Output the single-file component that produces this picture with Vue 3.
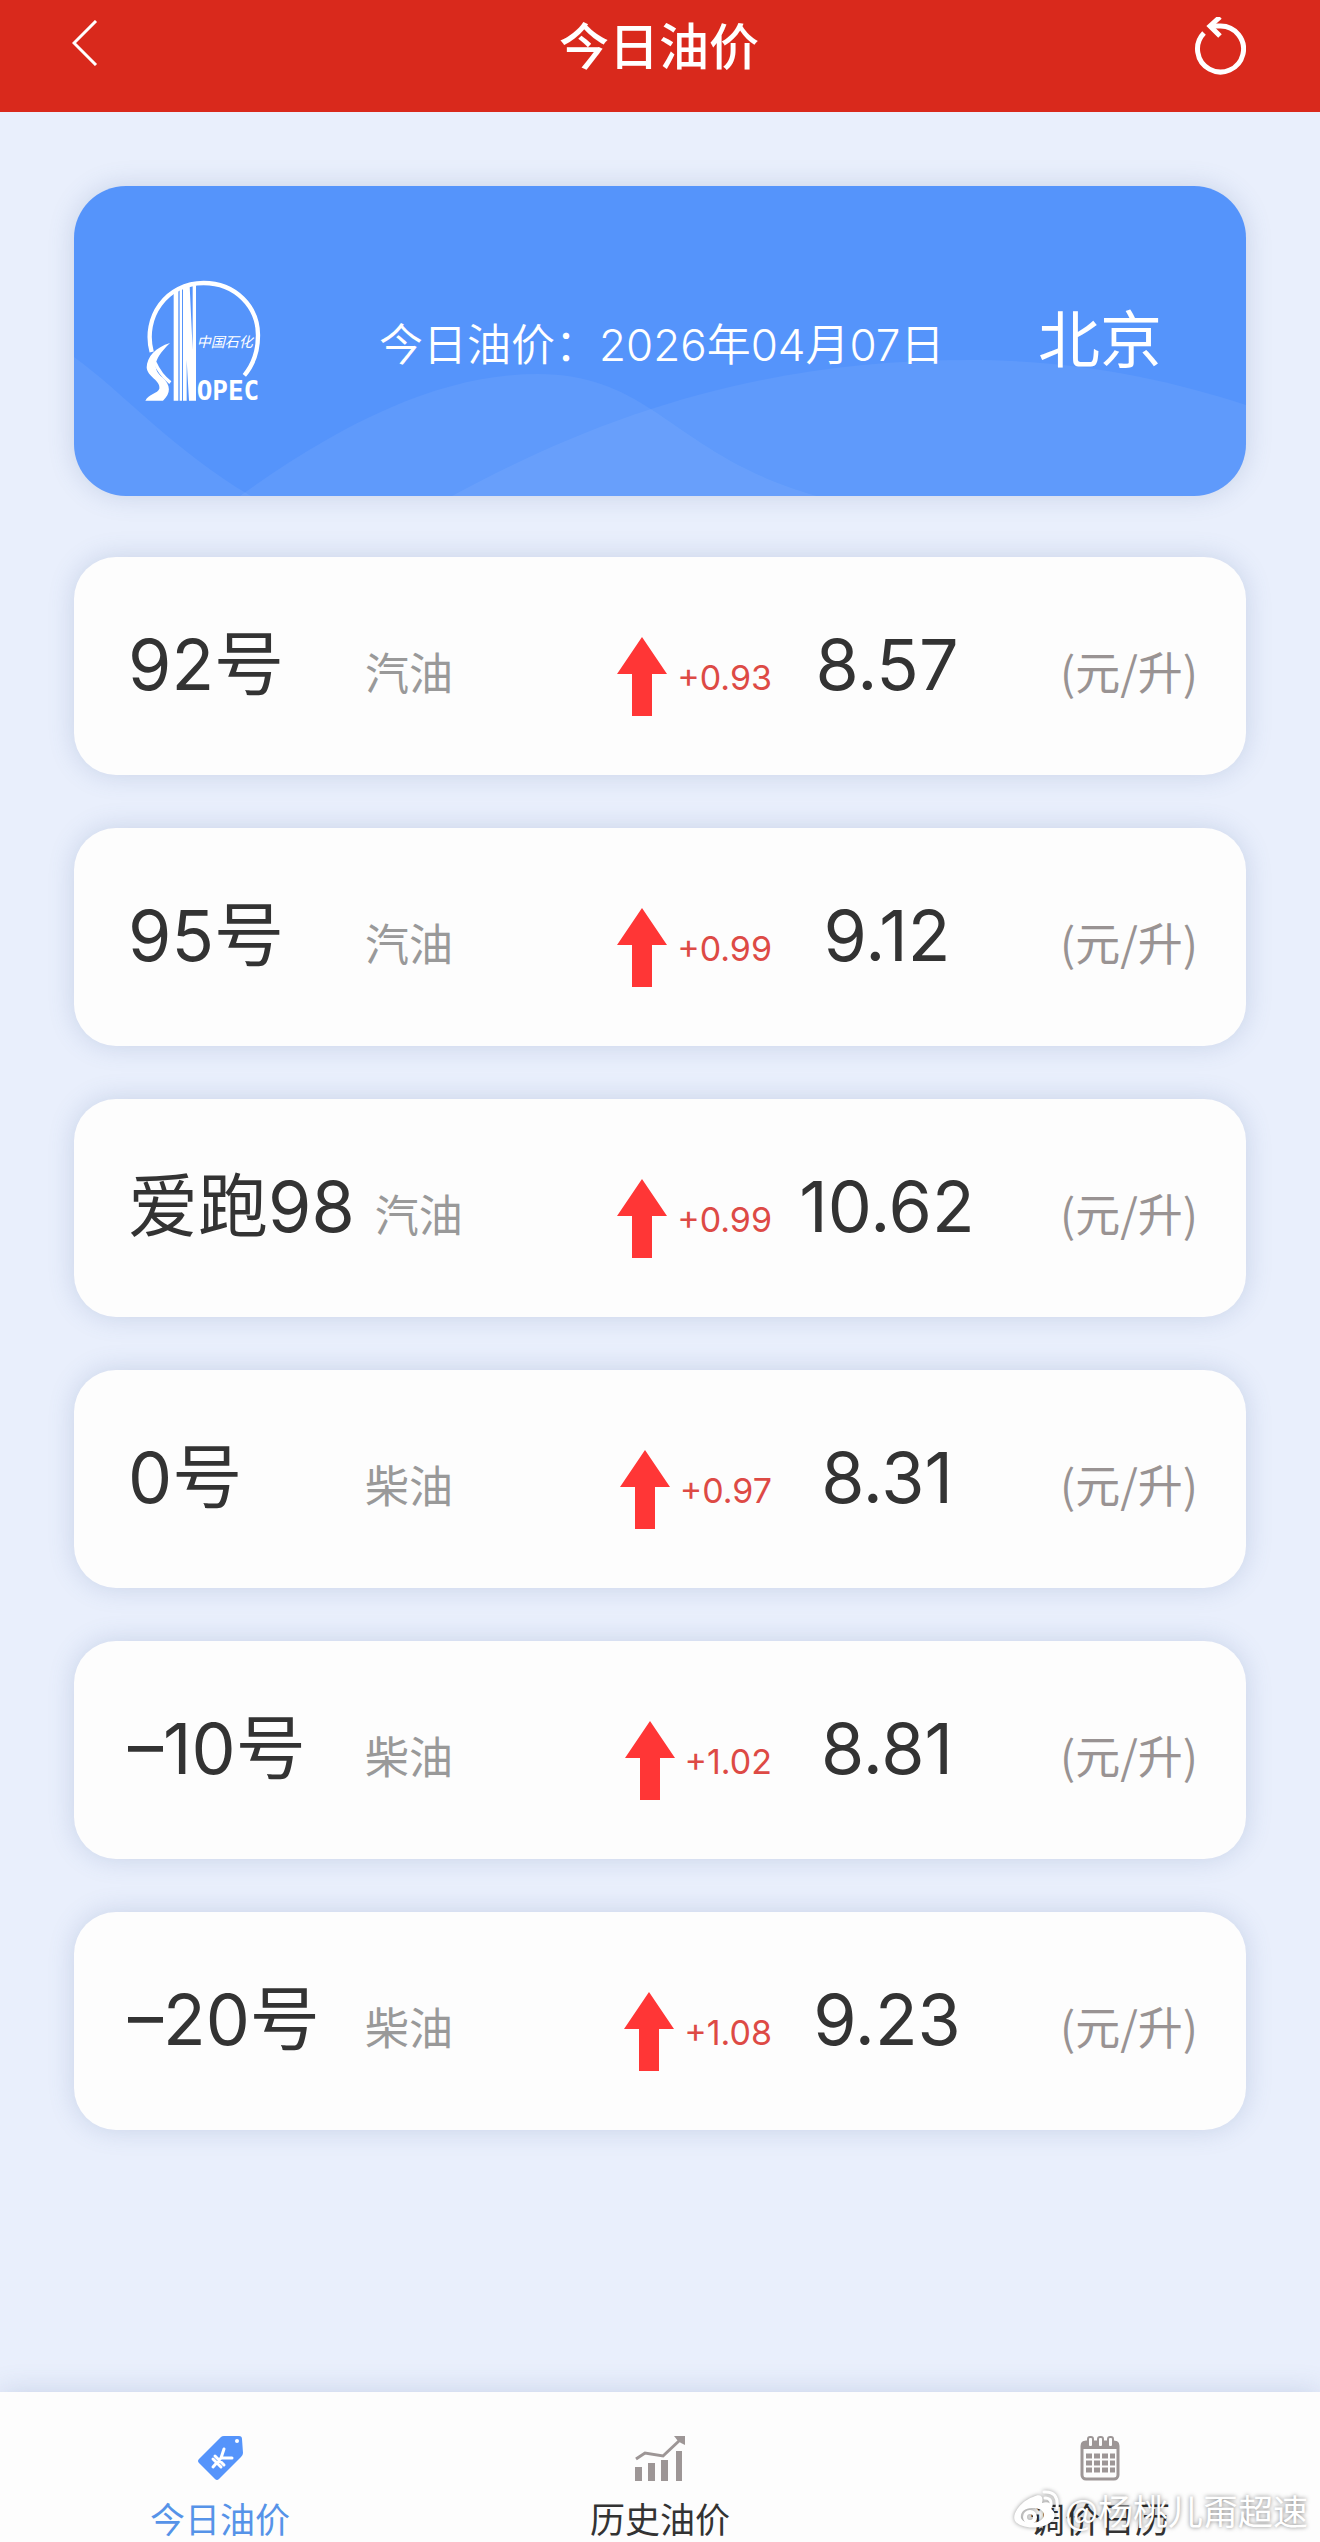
<template>
  <div class="page">
    <header class="header">
      <button class="icon-btn" aria-label="返回">
        <svg width="26" height="46" viewBox="0 0 26 46">
          <path d="M24 1 L2 23 L24 45" fill="none" stroke="#fff" stroke-width="3" />
        </svg>
      </button>
      <h1>今日油价</h1>
      <button class="icon-btn" aria-label="刷新">
        <svg width="52" height="58" viewBox="0 0 52 58">
          <path d="M10 16 A23 23 0 1 0 26 9 L18 9" fill="none" stroke="#fff" stroke-width="5" />
          <path d="M26 0 L16 9 L26 19" fill="none" stroke="#fff" stroke-width="5" />
        </svg>
      </button>
    </header>

    <main class="content">
      <section class="banner">
        <svg class="waves" viewBox="0 0 1172 310" preserveAspectRatio="none">
          <path d="M0 171 C50 207 100 265 177 310 L0 310 Z" />
          <path d="M166 310 C280 228 375 188 464 188 C580 188 600 270 743 310 Z" />
          <path d="M378 310 C540 222 700 174 896 174 C1000 174 1090 192 1172 219 L1172 310 Z" />
        </svg>
        <svg class="logo" width="116" height="122" viewBox="74 60 348 366">
          <path
            d="M94 276 C66 172 138 69 250 69 C345 69 413 140 413 226 C413 275 398 315 372 346"
            fill="none" stroke="#fff" stroke-width="13"
          />
          <path
            d="M149 249 C106 262 80 290 79 322 C80 350 122 362 117 386 C113 400 84 402 75 422 L128 422 C152 400 152 376 126 352 C100 330 92 304 149 249 Z"
            fill="#fff"
          />
          <path d="M104 308 C116 336 130 352 150 368" fill="none" stroke="#fff" stroke-width="10" />
          <path d="M160 98 L174 90 V422 H160 Z M178 88 L185 84 V422 H178 Z" fill="#fff" />
          <path d="M188 83 L208 78 L217 270 V76 H227 V422 H206 L199 300 V422 H188 Z" fill="#fff" />
          <text class="logo-cn" x="229" y="261">中国石化</text>
          <text class="logo-en" x="229" y="419">OPEC</text>
        </svg>
        <p class="date">今日油价：2026年04月07日</p>
        <p class="city">北京</p>
      </section>

      <ul class="list">
        <li v-for="item in prices" :key="item.name" class="card">
          <div class="fuel">
            <span class="name">{{ item.name }}</span>
            <span class="type">{{ item.type }}</span>
          </div>
          <div class="trend">
            <svg class="arrow" width="50" height="79" viewBox="0 0 50 79">
              <path d="M25 0 L50 37 H35 V79 H15 V37 H0 Z" fill="#ff3636" />
            </svg>
            <span>{{ item.change }}</span>
          </div>
          <span class="price">{{ item.price }}</span>
          <span class="unit">(元/升)</span>
        </li>
      </ul>
    </main>

    <nav class="tabs">
      <a
        v-for="tab in tabs"
        :key="tab.id"
        href="#"
        :class="{ active: tab.id === current }"
        @click.prevent="current = tab.id"
      >
        <svg v-if="tab.id === 'today'" width="45" height="45" viewBox="0 0 45 45">
          <path d="M1 23 L23 1 Q24 0 26 0 H41 Q44 0 44 3 L45 17 Q45 19 43 21 L21 43 Q19 45 17 43 L1 27 Q-1 25 1 23 Z" fill="#5594fb" />
          <circle cx="39" cy="5" r="2" fill="#fff" />
          <path
            d="M26 13 L23 22 L34 22 M23 22 L15 31 M17 20 L26 29 M15 23 L23 31"
            fill="none" stroke="#fff" stroke-width="3" stroke-linecap="round"
          />
        </svg>
        <svg v-else-if="tab.id === 'history'" width="50" height="45" viewBox="0 0 50 45">
          <path d="M0 31 H7 V45 H0 Z M13 27 H20 V45 H13 Z M26 24 H33 V45 H26 Z M41 15 H47 V45 H41 Z" fill="#9d9696" />
          <path d="M1 23 L10 17 L28 20 L45 4" fill="none" stroke="#9d9696" stroke-width="3" />
          <path d="M39 0 H50 V9 L46 7 L43 5 Z" fill="#9d9696" />
        </svg>
        <svg v-else width="40" height="45" viewBox="0 0 40 45">
          <rect x="2" y="6" width="36" height="37" rx="4" fill="none" stroke="#9d9696" stroke-width="3" />
          <path d="M1 13 V9 Q1 5 5 5 H35 Q39 5 39 9 V13 Z" fill="#9d9696" />
          <g fill="#fdfdfd" stroke="#9d9696" stroke-width="2">
            <rect x="8" y="1" width="5" height="10" rx="2" />
            <rect x="18" y="1" width="5" height="10" rx="2" />
            <rect x="28" y="1" width="5" height="10" rx="2" />
          </g>
          <path
            d="M6 20 H35 M6 27 H35 M6 34 H35"
            fill="none" stroke="#9d9696" stroke-width="5" stroke-dasharray="6 2"
          />
        </svg>
        <span>{{ tab.label }}</span>
      </a>
    </nav>

    <div class="watermark">
      <svg width="48" height="40" viewBox="0 0 48 40">
        <path
          fill-rule="evenodd"
          d="M20 7 C27 3 31 6 29 13 C36 11 40 14 38 19 C43 22 43 28 38 32 C28 40 8 39 2 31 C-2 23 10 10 20 7 Z M19 18 C11 18 7 23 8 28 C10 34 25 35 30 28 C33 22 28 18 19 18 Z"
          fill="#fff"
        />
        <circle cx="17" cy="27" r="5" fill="none" stroke="#fff" stroke-width="4" />
        <path d="M32 8 Q39 8 38 16 M31 2 Q46 1 44 18" fill="none" stroke="#fff" stroke-width="3" stroke-linecap="round" />
      </svg>
      <span>@杨桃儿甭超速</span>
    </div>
  </div>
</template>

<script setup>
import { ref } from 'vue';

const current = ref('today');

const prices = [
  { name: '92号', type: '汽油', change: '+0.93', price: '8.57' },
  { name: '95号', type: '汽油', change: '+0.99', price: '9.12' },
  { name: '爱跑98', type: '汽油', change: '+0.99', price: '10.62' },
  { name: '0号', type: '柴油', change: '+0.97', price: '8.31' },
  { name: '–10号', type: '柴油', change: '+1.02', price: '8.81' },
  { name: '–20号', type: '柴油', change: '+1.08', price: '9.23' },
];

const tabs = [
  { id: 'today', label: '今日油价' },
  { id: 'history', label: '历史油价' },
  { id: 'calendar', label: '调价日历' },
];
</script>

<style>
body {
  margin: 0;
  background-color: #e9effc;
}
</style>

<style scoped>
.page {
  position: relative;
  display: flex;
  flex-direction: column;
  min-height: 100vh;
  font-family: Inter, 'Noto Sans CJK SC', sans-serif;
  color: #333;
}

.header {
  display: flex;
  justify-content: space-between;
  box-sizing: border-box;
  height: 112px;
  padding: 17px 74px 0 72px;
  background-color: #d9291c;
  color: #fff;
}

.header h1 {
  margin: 0;
  font-size: 50px;
  line-height: 60px;
  font-weight: 500;
}

.icon-btn {
  display: flex;
  align-items: flex-start;
  width: 52px;
  height: 60px;
  padding: 0;
  border: none;
  background: none;
  cursor: pointer;
}

.icon-btn:first-child {
  padding-top: 3px;
}

.content {
  flex: 1;
  padding: 74px 74px 80px;
}

.banner {
  position: relative;
  display: flex;
  align-items: center;
  box-sizing: border-box;
  height: 310px;
  padding: 0 84px 0 71px;
  border-radius: 52px;
  background-color: #5594fb;
  box-shadow: 0 0 26px rgba(80, 110, 160, 0.22);
  color: #fff;
  overflow: hidden;
}

.waves {
  position: absolute;
  top: 0;
  left: 0;
  width: 100%;
  height: 100%;
  fill: rgba(255, 255, 255, 0.06);
}

.logo {
  position: relative;
  overflow: visible;
  fill: #fff;
}

.logo-cn {
  font-family: 'Noto Sans CJK SC', sans-serif;
  font-size: 42px;
  font-style: italic;
}

.logo-en {
  font-family: 'DejaVu Sans Mono', monospace;
  font-size: 78px;
  font-weight: bold;
}

.date {
  position: relative;
  flex: 1;
  margin: 0;
  padding: 8px 0 0 118px;
  font-size: 44px;
  line-height: 60px;
  font-weight: 350;
}

.city {
  position: relative;
  margin: 0;
  font-size: 62px;
  line-height: 80px;
}

.list {
  display: flex;
  flex-direction: column;
  gap: 53px;
  margin: 61px 0 0;
  padding: 0;
  list-style: none;
}

.card {
  display: flex;
  align-items: baseline;
  box-sizing: border-box;
  height: 218px;
  padding: 68px 48px 0 54px;
  border-radius: 42px;
  background-color: #fdfdfd;
  box-shadow: 0 0 26px rgba(80, 110, 160, 0.22);
  line-height: 80px;
  white-space: nowrap;
}

.fuel {
  display: flex;
  align-items: baseline;
  flex: 1;
  gap: 20px;
}

.name {
  min-width: 217px;
  font-size: 70px;
}

.type {
  font-size: 44px;
  color: #999;
}

.trend {
  font-size: 34px;
  color: #dd4a45;
}

.arrow {
  margin-right: 10px;
  vertical-align: -26px;
}

.price {
  width: 230px;
  font-size: 70px;
  text-align: center;
}

.unit {
  width: 196px;
  font-family: 'Noto Sans CJK SC', sans-serif;
  font-size: 45px;
  text-align: right;
  color: #999393;
}

.tabs {
  display: flex;
  height: 150px;
  background-color: #fdfdfd;
  box-shadow: 0 0 26px rgba(80, 110, 160, 0.22);
}

.tabs a {
  display: flex;
  flex: 1;
  flex-direction: column;
  align-items: center;
  gap: 14px;
  padding-top: 44px;
  font-size: 35px;
  line-height: 50px;
  color: #333;
  text-decoration: none;
}

.tabs svg {
  flex-shrink: 0;
}

.tabs .active {
  color: #5693e8;
}

.watermark {
  position: absolute;
  right: 12px;
  bottom: 8px;
  display: flex;
  align-items: center;
  gap: 4px;
  font-family: 'Noto Sans CJK SC', sans-serif;
  font-size: 35px;
  line-height: 48px;
  color: #fff;
  text-shadow: 0 0 4px rgba(0, 0, 0, 0.5);
  pointer-events: none;
}

.watermark svg {
  filter: drop-shadow(0 0 2px rgba(0, 0, 0, 0.4));
}
</style>
